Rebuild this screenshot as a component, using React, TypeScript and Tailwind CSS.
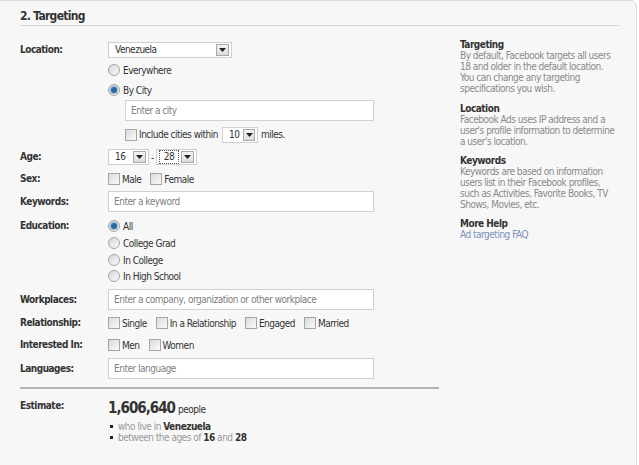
import React from "react";

const FONT = "font-['Tahoma','DejaVu_Sans_Condensed','DejaVu_Sans',sans-serif]";

function Arrow() {
  return (
    <span className="flex h-[12px] w-[13px] items-center justify-center border border-[#a8a8a8] bg-gradient-to-b from-[#f4f4f4] to-[#dcdcdc]">
      <svg width="7" height="4" viewBox="0 0 7 4">
        <path d="M0 0h7L3.5 4z" fill="#222" />
      </svg>
    </span>
  );
}

function Select({
  value,
  width,
  focused,
}: {
  value: string;
  width: string;
  focused?: boolean;
}) {
  return (
    <div
      className={`flex h-[16px] items-center justify-between border border-[#cfcfcf] bg-white pl-[2px] pr-[2px] ${width}`}
    >
      <span
        className={`px-[4px] leading-[12px] ${focused ? "border border-dotted border-[#555]" : ""}`}
      >
        {value}
      </span>
      <Arrow />
    </div>
  );
}

function Checkbox({ label }: { label: string }) {
  return (
    <span className="flex items-center gap-[2px]">
      <span className="h-[12px] w-[12px] border border-[#a5a5a5] bg-gradient-to-br from-[#dadada] to-[#fafafa]" />
      <span>{label}</span>
    </span>
  );
}

function Radio({ label, checked }: { label: string; checked?: boolean }) {
  return (
    <div className="flex h-[16px] items-center gap-[3px]">
      <span className="flex h-[12px] w-[12px] items-center justify-center rounded-full border border-[#a5a5a5] bg-gradient-to-br from-[#d8d8d8] to-[#f8f8f8]">
        {checked && (
          <span className="h-[6px] w-[6px] rounded-full bg-[#2a6aa3] shadow-[0_0_1px_1px_#8fb8dc]" />
        )}
      </span>
      <span>{label}</span>
    </div>
  );
}

function TextInput({ placeholder, width = "w-[266px]" }: { placeholder: string; width?: string }) {
  return (
    <div
      className={`flex h-[21px] items-center border border-[#d0d0d0] bg-white pl-[5px] text-[#808080] ${width}`}
    >
      {placeholder}
    </div>
  );
}

function Row({
  label,
  className = "",
  children,
}: {
  label: string;
  className?: string;
  children: React.ReactNode;
}) {
  return (
    <div className={`flex ${className}`}>
      <div className="w-[88px] shrink-0 font-bold leading-[16px] text-[#333]">{label}</div>
      <div className="flex-1">{children}</div>
    </div>
  );
}

function HelpBlock({ title, children, className = "" }: { title: string; children: React.ReactNode; className?: string }) {
  return (
    <div className={className}>
      <div className="font-bold text-[#333]">{title}</div>
      <div>{children}</div>
    </div>
  );
}

export default function App() {
  return (
    <div className={`h-[465px] w-[639px] overflow-hidden bg-white text-[10px] tracking-[-0.5px] text-[#333] ${FONT}`}>
      <div className="h-[470px] w-[637px] rounded-tr-[7px] border-t border-r border-[#dcdcdc] bg-[#f7f7f7] pl-[20px] pr-[17px]">
        {/* section heading */}
        <div className="border-b border-[#d6d6d6] pt-[8px] pb-[2px] text-[12px] font-bold leading-[14px] tracking-[-0.7px] text-[#333]">
          2. Targeting
        </div>

        <div className="flex">
          {/* form column */}
          <div className="w-[419px] shrink-0">
            <Row label="Location:" className="mt-[16px]">
              <Select value="Venezuela" width="w-[124px]" />
              <div className="mt-[4px]">
                <Radio label="Everywhere" />
              </div>
              <div className="mt-[4px]">
                <Radio label="By City" checked />
              </div>
              <div className="ml-[17px] mt-[2px]">
                <TextInput placeholder="Enter a city" width="w-[249px]" />
                <div className="mt-[5px] flex h-[17px] items-center">
                  <Checkbox label="Include cities within" />
                  <div className="ml-[4px]">
                    <Select value="10" width="w-[36px]" />
                  </div>
                  <span className="ml-[3px]">miles.</span>
                </div>
              </div>
            </Row>

            <Row label="Age:" className="mt-[6px]">
              <div className="flex items-center">
                <Select value="16" width="w-[41px]" />
                <span className="mx-[2px]">-</span>
                <Select value="28" width="w-[41px]" focused />
              </div>
            </Row>

            <Row label="Sex:" className="mt-[6px]">
              <div className="flex h-[16px] items-center gap-[9px]">
                <Checkbox label="Male" />
                <Checkbox label="Female" />
              </div>
            </Row>

            <Row label="Keywords:" className="mt-[4px] items-center">
              <TextInput placeholder="Enter a keyword" />
            </Row>

            <Row label="Education:" className="mt-[6px]">
              <Radio label="All" checked />
              <div className="mt-[1px]">
                <Radio label="College Grad" />
              </div>
              <div className="mt-[1px]">
                <Radio label="In College" />
              </div>
              <Radio label="In High School" />
            </Row>

            <Row label="Workplaces:" className="mt-[5px] items-center">
              <TextInput placeholder="Enter a company, organization or other workplace" />
            </Row>

            <Row label="Relationship:" className="mt-[5px]">
              <div className="flex h-[16px] items-center gap-[9px]">
                <Checkbox label="Single" />
                <Checkbox label="In a Relationship" />
                <Checkbox label="Engaged" />
                <Checkbox label="Married" />
              </div>
            </Row>

            <Row label="Interested In:" className="mt-[6px]">
              <div className="flex h-[16px] items-center gap-[9px]">
                <Checkbox label="Men" />
                <Checkbox label="Women" />
              </div>
            </Row>

            <Row label="Languages:" className="mt-[5px] items-center">
              <TextInput placeholder="Enter language" />
            </Row>

            <div className="mt-[8px] border-t-2 border-[#b4b4b4]" />

            <Row label="Estimate:" className="mt-[9px]">
              <div className="flex items-baseline gap-[3px] pt-[1px]">
                <span className="text-[15px] font-bold leading-[18px] tracking-[-1px] text-[#333]">1,606,640</span>
                <span className="text-[10px]">people</span>
              </div>
              <ul className="mt-[4px] leading-[11px] text-[#999]">
                <li className="flex items-center gap-[5px]">
                  <span className="ml-[2px] h-[3px] w-[3px] bg-[#222]" />
                  <span>
                    who live in <b className="text-[#333]">Venezuela</b>
                  </span>
                </li>
                <li className="flex items-center gap-[5px]">
                  <span className="ml-[2px] h-[3px] w-[3px] bg-[#222]" />
                  <span>
                    between the ages of <b className="text-[#333]">16</b> and{" "}
                    <b className="text-[#333]">28</b>
                  </span>
                </li>
              </ul>
            </Row>
          </div>

          {/* help sidebar */}
          <div className="ml-[21px] w-[158px] pt-[13px] leading-[11px] text-[#8a8a8a]">
            <HelpBlock title="Targeting" className="mb-[9px]">
              By default, Facebook targets all users 18 and older in the default location. You can
              change any targeting specifications you wish.
            </HelpBlock>
            <HelpBlock title="Location" className="mb-[8px]">
              Facebook Ads uses IP address and a user's profile information to determine a user's
              location.
            </HelpBlock>
            <HelpBlock title="Keywords" className="mb-[8px]">
              Keywords are based on information users list in their Facebook profiles, such as
              Activities, Favorite Books, TV Shows, Movies, etc.
            </HelpBlock>
            <HelpBlock title="More Help">
              <span className="text-[#7b8fc0]">Ad targeting FAQ</span>
            </HelpBlock>
          </div>
        </div>
      </div>
    </div>
  );
}
